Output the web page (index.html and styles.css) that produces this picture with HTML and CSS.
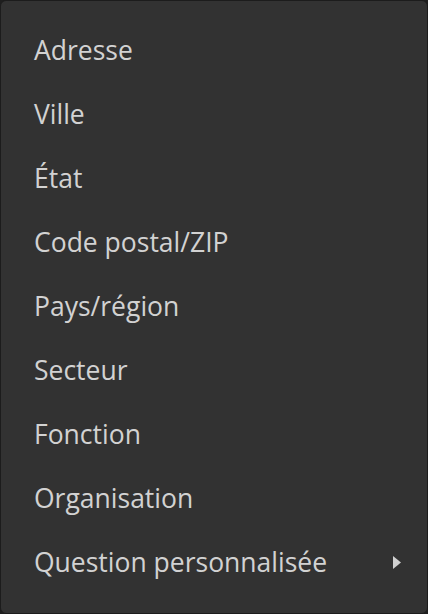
FILE: index.html
```html
<!DOCTYPE html>
<html lang="fr">
<head>
<meta charset="utf-8">
<link rel="stylesheet" href="styles.css">
</head>
<body>
<div class="menu">
  <div class="item">Adresse</div>
  <div class="item">Ville</div>
  <div class="item">État</div>
  <div class="item">Code postal/ZIP</div>
  <div class="item">Pays/région</div>
  <div class="item">Secteur</div>
  <div class="item">Fonction</div>
  <div class="item">Organisation</div>
  <div class="item has-sub">
    <span>Question personnalisée</span>
    <svg class="chev" width="8" height="13" viewBox="0 0 8 13"><path d="M0 0 L8 6.5 L0 13 Z" fill="#d0d0d0"/></svg>
  </div>
</div>
</body>
</html>
```

FILE: styles.css
```css
html, body {
  margin: 0;
  padding: 0;
  background: #1e1e1e;
}
.menu {
  box-sizing: border-box;
  width: 428px;
  height: 614px;
  background: #323232;
  border: 1px solid #1c1c1c;
  border-radius: 6px;
  padding: 17px 26px 0 33px;
  font-family: "Open Sans", "Noto Sans", sans-serif;
  font-size: 26.5px;
  color: #d2d2d2;
}
.item {
  height: 64px;
  line-height: 64px;
  white-space: nowrap;
}
.has-sub {
  display: flex;
  align-items: center;
  justify-content: space-between;
}
.chev {
  display: block;
  margin-top: 0;
}
```
